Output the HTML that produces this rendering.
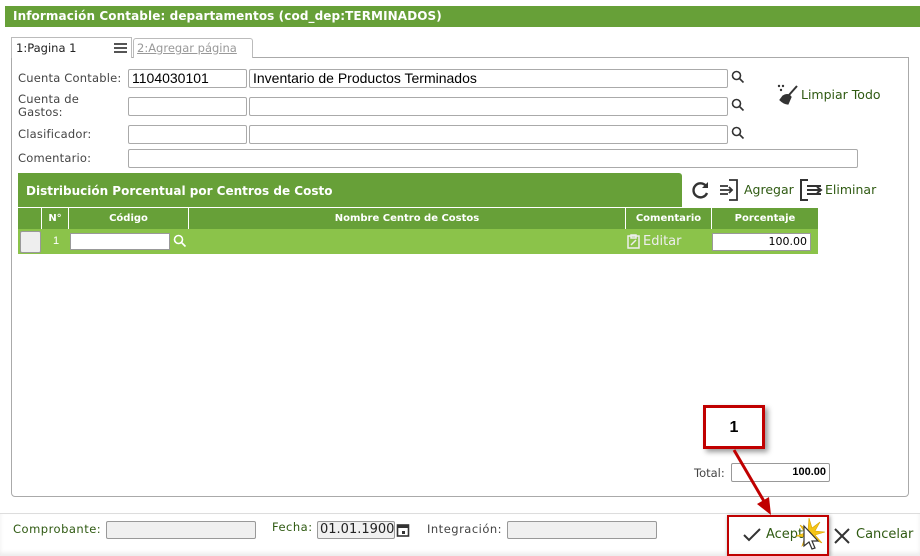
<!DOCTYPE html>
<html><head><meta charset="utf-8"><style>
*{box-sizing:border-box;margin:0;padding:0}
body{width:920px;height:556px;background:#fff;position:relative;overflow:hidden;font-family:"Liberation Sans","DejaVu Sans",sans-serif;font-size:12px;color:#333}
.a{position:absolute}
.in{position:absolute;border:1px solid #aaa;background:#fff;height:19px;border-radius:2px;font-size:14px;color:#000;padding-left:3px;line-height:17px}
.lbl{position:absolute;font-family:"DejaVu Sans",sans-serif;font-size:11.5px;color:#444;letter-spacing:.2px}
.th{position:absolute;top:208px;height:21px;color:#fff;font-weight:bold;font-size:10px;font-family:"DejaVu Sans",sans-serif;text-align:center;line-height:21px;border-left:1px solid #fff}
</style></head><body>
<div class="a" style="left:5px;top:6px;width:915px;height:21px;background:#67a038;color:#fff;font-weight:bold;font-family:'DejaVu Sans',sans-serif;font-size:12px;line-height:21px;padding-left:8px;letter-spacing:.1px">Información Contable: departamentos (cod_dep:TERMINADOS)</div>
<div class="a" style="left:11px;top:57px;width:898px;height:440px;border:1px solid #aaa;border-top:1px solid #aaa;border-radius:0 0 4px 4px"></div>
<div class="a" style="left:11px;top:37px;width:121px;height:21px;border:1px solid #bbb;border-bottom:none;background:#fff;font-family:'DejaVu Sans',sans-serif;font-size:11.5px;padding:3px 0 0 4px;color:#222">1:Pagina 1</div>
<div class="a" style="left:114px;top:43px;width:13px;height:2px;background:#555;box-shadow:0 4px 0 #555,0 8px 0 #555"></div>
<div class="a" style="left:133px;top:38px;width:120px;height:20px;border:1px solid #bbb;border-bottom:none;border-radius:3px 3px 0 0;background:#fff;font-family:'DejaVu Sans',sans-serif;font-size:11.5px;padding:2px 0 0 3px;color:#999;text-decoration:underline">2:Agregar página</div>

<div class="lbl" style="left:18px;top:71px">Cuenta Contable:</div>
<div class="lbl" style="left:18px;top:93px;line-height:13px">Cuenta de<br>Gastos:</div>
<div class="lbl" style="left:18px;top:127px">Clasificador:</div>
<div class="lbl" style="left:18px;top:151px">Comentario:</div>
<div class="in" style="left:128px;top:69px;width:119px">1104030101</div>
<div class="in" style="left:249px;top:69px;width:479px">Inventario de Productos Terminados</div>
<div class="in" style="left:128px;top:97px;width:119px"></div>
<div class="in" style="left:249px;top:97px;width:479px"></div>
<div class="in" style="left:128px;top:125px;width:119px"></div>
<div class="in" style="left:249px;top:125px;width:479px"></div>
<div class="in" style="left:128px;top:149px;width:730px"></div>
<svg class="a" style="left:731px;top:70px" width="14" height="80"><g fill="none" stroke="#333" stroke-width="1.6"><circle cx="5.5" cy="5.5" r="4"/><path d="M8.5 8.5l4 4"/><circle cx="5.5" cy="33.5" r="4"/><path d="M8.5 36.5l4 4"/><circle cx="5.5" cy="61.5" r="4"/><path d="M8.5 64.5l4 4"/></g></svg>
<svg class="a" style="left:777px;top:84px" width="22" height="22"><g fill="#333"><circle cx="2" cy="2" r="1.2"/><circle cx="6" cy="2" r="1.2"/><circle cx="4" cy="6" r="1.2"/></g><path d="M20 2L12 11" stroke="#333" stroke-width="2"/><path d="M6 12c3-2 6-2 8 1l-3 7c-3 0-6-2-8-4z" fill="#333" stroke="#333" stroke-width="1.2"/></svg>
<div class="a" style="left:801px;top:87px;font-size:12.5px;color:#2f5a12;font-family:'DejaVu Sans',sans-serif">Limpiar Todo</div>

<div class="a" style="left:18px;top:173px;width:664px;height:34px;background:#67a038;border-radius:0 3px 0 0;color:#fff;font-weight:bold;font-family:'DejaVu Sans',sans-serif;font-size:12px;line-height:36px;padding-left:8px">Distribución Porcentual por Centros de Costo</div>
<svg class="a" style="left:691px;top:180px" width="20" height="20"><path d="M15 6A7 7 0 1 0 16 13" fill="none" stroke="#333" stroke-width="2.4"/><path d="M17 2v6h-6z" fill="#333"/></svg>
<svg class="a" style="left:719px;top:179px" width="20" height="22"><g fill="none" stroke="#333" stroke-width="1.8"><path d="M10 1h8v20h-8"/><path d="M1 7h8M1 11h12M1 15h8"/><path d="M10 8l3 3-3 3"/></g></svg>
<div class="a" style="left:744px;top:182px;font-size:12.5px;color:#2f5a12;font-family:'DejaVu Sans',sans-serif">Agregar</div>
<svg class="a" style="left:799px;top:178px" width="26" height="24"><g fill="none" stroke="#333" stroke-width="2"><path d="M9 2H2v20h7"/><path d="M8 8h14M8 12h14M8 16h14"/><path d="M18 9l4 3-4 3"/></g></svg>
<div class="a" style="left:825px;top:182px;font-size:12.5px;color:#2f5a12;font-family:'DejaVu Sans',sans-serif">Eliminar</div>

<div class="a" style="left:18px;top:208px;width:800px;height:21px;background:#67a038"></div>
<div class="th" style="left:41px;width:27px">N°</div>
<div class="th" style="left:68px;width:120px">Código</div>
<div class="th" style="left:188px;width:437px">Nombre Centro de Costos</div>
<div class="th" style="left:625px;width:86px">Comentario</div>
<div class="th" style="left:711px;width:107px">Porcentaje</div>
<div class="a" style="left:18px;top:229px;width:800px;height:25px;background:#8bc34a"></div>
<div class="a" style="left:20px;top:231px;width:21px;height:22px;background:#eee;border:1px solid #999;border-radius:2px"></div>
<div class="a" style="left:53px;top:235px;color:#fff;font-size:11px">1</div>
<div class="a" style="left:70px;top:233px;width:100px;height:17px;background:#fff;border:1px solid #999"></div>
<svg class="a" style="left:173px;top:234px" width="14" height="14"><g fill="none" stroke="#fff" stroke-width="1.6"><circle cx="5.5" cy="5.5" r="4"/><path d="M8.5 8.5l4 4"/></g></svg>
<svg class="a" style="left:627px;top:233px" width="13" height="16"><g fill="none" stroke="#eee" stroke-width="1.5"><rect x="1" y="3" width="11" height="12"/><path d="M4 2h5v3H4zM4 12l5-5"/></g></svg>
<div class="a" style="left:643px;top:234px;font-size:13px;color:#eee;font-family:'DejaVu Sans',sans-serif">Editar</div>
<div class="a" style="left:712px;top:233px;width:99px;height:18px;background:#fff;border:1px solid #999;text-align:right;padding-right:3px;font-size:11px;line-height:16px;color:#000;font-family:'DejaVu Sans',sans-serif">100.00</div>

<div class="a" style="left:694px;top:466px;font-size:11.5px;color:#444;font-family:'DejaVu Sans',sans-serif">Total:</div>
<div class="a" style="left:731px;top:463px;width:99px;height:19px;border:1px solid #999;border-radius:2px;text-align:right;padding-right:3px;font-size:11px;font-weight:bold;line-height:17px;color:#000">100.00</div>

<div class="a" style="left:0;top:513px;width:920px;height:43px;border-top:1px solid #ddd;box-shadow:0 -3px 4px rgba(0,0,0,.08) inset"></div>
<div class="a" style="left:13px;top:522px;font-size:11.5px;color:#2f5a12;font-family:'DejaVu Sans',sans-serif;letter-spacing:.5px">Comprobante:</div>
<div class="a" style="left:106px;top:521px;width:150px;height:18px;border:1px solid #999;background:#f0f0f0;border-radius:2px"></div>
<div class="a" style="left:272px;top:520px;font-size:11.5px;color:#2f5a12;font-family:'DejaVu Sans',sans-serif;letter-spacing:.5px">Fecha:</div>
<div class="a" style="left:317px;top:521px;width:78px;height:18px;border:1px solid #999;background:#f0f0f0;border-radius:2px;font-size:13px;line-height:16px;padding-left:2px;color:#222;font-family:'DejaVu Sans',sans-serif">01.01.1900</div>
<svg class="a" style="left:396px;top:522px" width="14" height="15"><rect x="1.5" y="3" width="11" height="11" fill="none" stroke="#333" stroke-width="1.6"/><rect x="1.5" y="3" width="11" height="3" fill="#333"/><rect x="6" y="9" width="3" height="3" fill="#333"/></svg>
<div class="a" style="left:427px;top:522px;font-size:11.5px;color:#444;font-family:'DejaVu Sans',sans-serif;letter-spacing:.5px">Integración:</div>
<div class="a" style="left:507px;top:521px;width:150px;height:18px;border:1px solid #999;background:#f0f0f0;border-radius:2px"></div>

<div class="a" style="left:727px;top:515px;width:102px;height:41px;border:2px solid #c00000;box-shadow:1px 1px 4px rgba(0,0,0,.4)"></div>
<svg class="a" style="left:742px;top:527px" width="20" height="16"><path d="M2 8l5 5L18 2" fill="none" stroke="#333" stroke-width="2"/></svg>
<div class="a" style="left:766px;top:527px;font-size:13px;color:#2f5a12;font-family:'DejaVu Sans',sans-serif">Acept</div>
<svg class="a" style="left:792px;top:514px" width="40" height="42"><path d="M17 4l3 10 8-6-5 9 10 1-10 3 7 8-9-4-1 10-3-9-7 6 3-9-9-1 9-3-5-8 8 5z" fill="#f5c518" stroke="#d9a400" stroke-width=".6"/><path d="M12 12v20l5-4 3 7 3-1-3-7 6 0z" fill="#fff" stroke="#333" stroke-width="1.2"/></svg>
<svg class="a" style="left:833px;top:527px" width="18" height="18"><path d="M2 2l14 14M16 2L2 16" stroke="#333" stroke-width="2"/></svg>
<div class="a" style="left:856px;top:527px;font-size:13px;color:#2f5a12;font-family:'DejaVu Sans',sans-serif">Cancelar</div>

<div class="a" style="left:703px;top:405px;width:62px;height:44px;border:3px solid #c00000;background:#fff;box-shadow:3px 3px 5px rgba(0,0,0,.4);text-align:center;font-weight:bold;font-size:16px;line-height:40px;color:#000">1</div>
<svg class="a" style="left:725px;top:448px" width="60" height="70"><path d="M9 2L40 55" stroke="#c00000" stroke-width="3"/><path d="M32 56l14 11-2-18z" fill="#c00000"/></svg>
</body></html>
